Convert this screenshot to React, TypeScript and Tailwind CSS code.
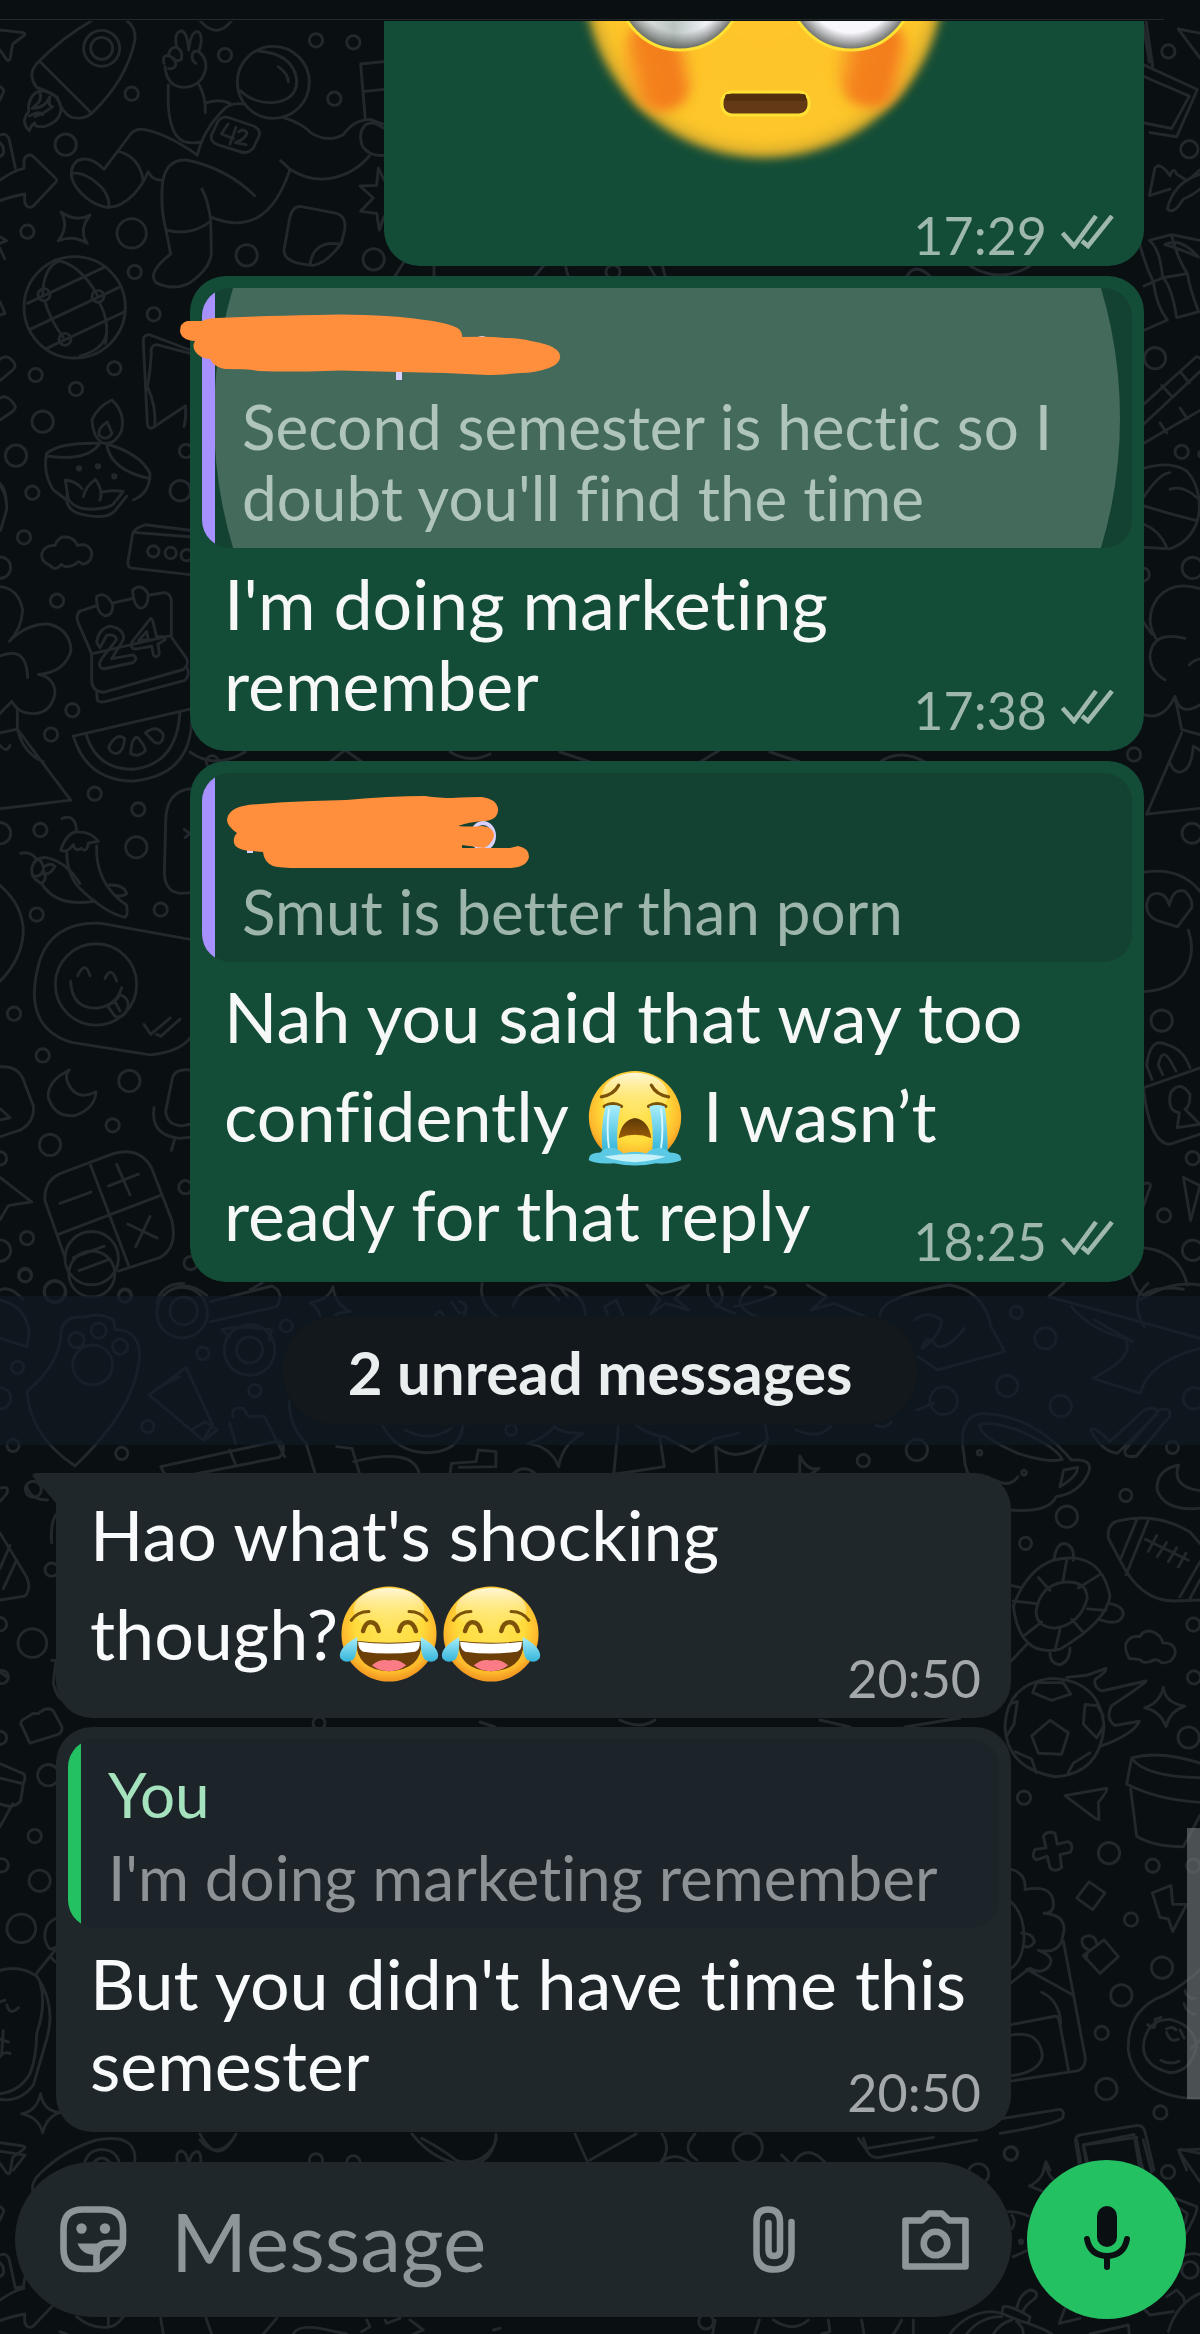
import React, { type ReactNode } from "react";

type Dot = [number, number, number];

/* Small bubbles scattered over the wallpaper; k is the height / width ratio of the group's units. */
function Dots({ at, k }: { at: Dot[]; k: number }) {
  return (
    <>
      {at.map(([x, y, r], i) => (
        <ellipse key={i} cx={x} cy={y} rx={r} ry={r * k} vectorEffect="non-scaling-stroke" />
      ))}
    </>
  );
}

function Lines({ d }: { d: string[] }) {
  return (
    <>
      {d.map((p, i) => (
        <path key={i} d={p} vectorEffect="non-scaling-stroke" />
      ))}
    </>
  );
}

const topLeft = [
  "M0 90L70 98Q80 102 70 108L38 132L30 178Q24 186 18 176L0 150",
  "M275 62Q190 110 118 183L275 340Q380 240 405 120Q408 80 380 62",
  "M118 183Q78 220 110 262Q150 275 172 292Q186 340 215 352Q250 360 275 340",
  "M118 272Q82 290 86 335Q60 366 88 392Q94 374 104 368Q100 382 132 380Q182 366 183 325Q176 276 118 272",
  "M118 276Q132 300 96 325Q134 326 150 290Q142 318 158 320Q130 342 104 350M88 348Q120 330 128 344",
  "M600 62Q650 120 695 62",
  "M530 140Q520 96 545 93Q562 98 566 150Q572 96 592 94Q612 104 598 150",
  "M492 190Q484 168 504 166Q522 172 528 192Q524 208 506 206M506 162Q512 140 530 142Q550 154 544 178Q530 188 520 174",
  "M576 170Q576 150 596 154Q626 180 615 215Q600 262 548 262Q500 258 495 200M576 170Q576 182 588 190",
  "M505 255Q498 400 550 424Q575 432 605 426M596 252Q618 290 616 338",
  "M620 308Q660 296 690 310M732 312Q690 306 670 330Q610 390 592 465Q500 400 430 388Q405 386 392 402L312 508Q270 464 232 482Q200 510 225 556Q262 610 320 622Q360 624 400 584Q428 555 444 516",
  "M444 516Q462 544 488 540M355 454Q420 470 430 544M216 520Q260 514 310 568Q332 600 325 622",
  "M722 272Q760 310 820 308Q892 300 890 240Q880 160 772 153M835 200Q865 222 865 246",
  "M850 352Q910 372 932 398Q980 430 1030 404Q1060 360 1110 358L1150 372M1150 466Q1110 470 1088 440Q1072 400 1096 374Q1120 360 1150 384",
  "M1096 360L1082 192L1152 185M1092 274L1152 268",
  "M842 482L870 508Q950 560 1040 520Q1080 502 1108 468M870 508Q800 720 635 652",
  "M764 587Q680 505 560 480Q500 476 488 545Q480 620 498 690L512 762Q440 818 468 848Q520 874 570 848Q630 806 634 760L632 660Q624 600 606 568",
  "M498 690Q570 710 632 664",
  "M655 362Q668 346 690 354L760 378Q782 388 778 406L760 444Q744 462 724 456L652 434Q630 424 634 406Z",
  "M684 372L664 402L700 416M708 382L690 432M716 396Q728 384 740 396Q744 412 706 428L738 434",
  "M0 405Q20 396 28 420L46 504M0 428Q14 440 10 462L0 470M0 540Q40 512 72 505L72 480Q80 458 98 468L164 532Q176 540 164 550L100 618Q82 630 74 606L74 582Q30 590 0 602",
  "M183 636Q228 668 270 645Q234 692 262 730Q220 704 175 722Q208 680 183 636",
  "M904 620L1010 640Q1040 650 1034 690L1024 730Q980 790 940 796Q850 790 852 750L868 660Q876 616 904 620M930 794Q940 720 1020 732",
  "M1152 540L1135 504L1130 556L1080 558L1120 594L1082 634L1130 640L1138 690L1152 650",
  "M0 710L20 722L0 730M0 745L14 776M0 905L15 940L0 945M0 260Q16 268 8 282L0 300",
  "M128 885Q130 800 180 782M165 780Q240 790 292 886M320 1000Q310 1050 240 1068M135 905Q150 960 190 1012M296 905Q330 960 316 1030",
  "M82 910L312 802M90 988L362 860M140 1045L372 936",
  "M0 1078Q20 1060 40 1085Q52 1100 36 1112L0 1142M0 1195Q20 1180 44 1215Q52 1226 30 1240L0 1260",
  "M570 1050L448 1004Q428 1004 430 1026L442 1270Q444 1290 460 1282L556 1218M570 1060L470 1034Q450 1036 454 1060Q450 1120 442 1160Q470 1220 464 1280M556 1218Q560 1250 552 1280",
  "M336 1200Q292 1220 276 1260Q278 1310 306 1328Q340 1340 364 1294Q378 1240 336 1200M322 1266Q290 1286 298 1306Q320 1326 336 1300Z",
  "M300 1330Q180 1326 140 1360Q128 1420 160 1470L200 1500M140 1368Q260 1386 300 1330M320 1332Q420 1360 450 1420Q450 1480 400 1500M320 1332Q330 1410 450 1436",
  "M205 1500L196 1440Q230 1444 246 1466M250 1490Q256 1460 286 1438Q310 1470 300 1500M306 1476Q340 1470 370 1474L350 1500M0 1450Q18 1470 18 1500",
];

const leftSide = [
  "M0 65Q22 85 20 110L2 148M200 85Q220 115 300 108Q340 105 345 95M200 90Q200 110 240 118Q320 130 345 112L380 85",
  "M150 213Q120 205 126 190Q135 175 165 176Q175 160 195 160Q225 162 232 176Q270 170 276 192Q270 212 245 210Q235 202 228 210Q200 220 184 211Q165 225 150 213",
  "M570 148L436 138Q400 145 398 155L384 205Q382 218 396 218L570 230M400 152L570 160",
  "M236 298L290 287M340 282L398 274M445 268L495 263Q514 266 514 280L514 345L560 385Q568 395 550 405L310 447Q275 445 275 425L275 376L234 318Q226 305 240 298M275 376L514 342",
  "M290 447L292 462Q300 468 330 462L555 425Q570 415 562 402M290 270Q318 260 338 285Q340 305 315 306Q288 300 290 270M398 258Q425 245 444 265Q446 290 422 292Q400 288 398 258",
  "M290 355Q295 330 330 325Q375 330 370 350L335 385L400 378Q415 384 400 392L310 404Q290 400 305 385L350 350Q345 338 320 342L300 365Z",
  "M450 312L395 355Q390 368 410 367L455 362L460 378Q470 386 478 376L474 358L495 350Q500 342 470 345L460 320Q456 308 450 312M440 335L415 352L445 350Z",
  "M0 252Q55 255 68 295Q65 330 28 353Q80 320 145 321Q210 330 213 370Q195 410 115 414Q165 420 165 450Q150 490 90 486Q55 485 35 464L0 486M0 380Q80 360 83 420M52 480L52 515M0 522L52 515L212 646L0 662M52 515Q70 560 130 575M0 545Q20 560 30 545",
  "M220 528L570 478M220 528Q260 610 400 611Q570 600 575 500M258 524Q290 590 400 589Q530 580 540 484",
  "M326 548Q350 520 374 532Q370 560 345 560Q330 558 326 548M392 560Q395 530 412 530Q435 545 436 555Q415 568 392 560M436 522Q470 505 490 525Q488 545 465 540Z",
  "M186 680Q225 670 230 702M182 738Q205 700 240 705Q275 705 295 722L265 725Q260 745 245 735Q225 742 220 728Q200 745 182 738M200 740Q200 790 250 815Q320 855 375 862Q385 858 380 840Q285 800 290 730",
  "M62 744Q95 740 110 756M125 800Q90 790 96 770Q105 750 140 752Q200 760 240 800M100 785Q120 790 130 775Q145 790 125 800Q170 845 285 832M110 755Q125 755 130 770Q150 760 165 768Q150 785 130 782M320 803Q370 800 380 818Q370 825 345 822",
  "M570 625Q495 630 497 690L493 780Q495 815 540 818L570 817M553 700Q570 710 575 705L555 715M0 803Q70 840 70 890Q65 940 0 980",
  "M570 903L300 873Q160 870 120 940Q60 1065 215 1093L450 1116Q540 1110 570 1085M212 980Q215 1030 290 1030Q350 1025 365 992M233 970Q255 940 270 970M315 975Q335 950 350 980",
  "M322 1025Q345 1020 360 1005Q385 1010 385 1025Q375 1050 345 1045ZM345 1018L360 1035M432 1060L452 1078L510 1048M470 1078L482 1082L540 1050",
  "M208 1144Q140 1165 145 1195Q165 1232 225 1228Q285 1215 288 1184Q235 1200 210 1175Q190 1155 208 1144M0 1138Q60 1135 75 1170L100 1210Q105 1240 60 1255L0 1267M0 1215L30 1232L0 1236",
  "M570 1144Q520 1140 515 1165L497 1220Q500 1245 545 1247L570 1244M462 1213Q450 1265 540 1270L570 1268M524 1272L514 1292",
  "M135 1385Q130 1350 180 1335L340 1298Q420 1285 455 1325L515 1420Q535 1470 480 1490L355 1515M135 1385L195 1490M272 1320L385 1503M175 1447L478 1376",
  "M180 1390L273 1369M325 1358L415 1336M350 1318L390 1374M383 1428L472 1454M450 1414L407 1470M220 1490L313 1469M237 1514L330 1493",
  "M0 1342L95 1387L25 1394L0 1420M0 1550Q30 1540 70 1568M490 1560Q550 1525 620 1560",
];

const rightSide = [
  "M40 30L58 75M48 25L68 80M40 78L202 108L140 165L60 160M40 92L178 116L125 155L40 148M145 35L210 70M145 35L210 40",
  "M85 200L75 202L58 236L120 228M85 200Q100 200 120 212Q130 200 140 210L172 218L210 205M112 252Q130 220 210 210M112 252Q130 260 160 240Q190 235 210 228",
  "M30 295Q45 320 70 340Q80 370 112 386L44 398M58 290L124 283L210 290M58 290Q90 300 98 335L42 345M98 335Q125 345 140 383L206 376Q180 350 172 330L98 335M124 283Q140 310 172 330M105 295Q150 285 205 310M105 295Q150 300 205 310",
  "M40 488L200 430L210 432M40 512L210 448M40 535L210 495M95 465L125 478M150 448L178 462M90 510L110 522M150 492L172 505",
  "M40 565Q120 555 170 568Q210 585 208 615Q200 650 120 662L40 660M40 600Q90 570 120 570M40 610Q120 620 200 628M40 632Q90 640 110 660M120 590Q160 585 200 600",
  "M78 770Q40 745 85 720Q130 700 210 710M165 770Q70 760 60 790Q60 810 105 820M40 862Q100 870 135 840Q150 865 210 850M135 840L155 880L210 886M155 884L50 982L210 975M120 920Q135 935 160 930Q185 925 190 900L210 905M178 802Q190 796 210 795M40 750L66 765",
  "M40 1052Q150 1045 210 1075M50 1092Q55 1075 90 1078Q110 1080 118 1092Q130 1070 165 1075Q190 1085 185 1095L142 1118L80 1110Q50 1105 50 1092M175 1122Q200 1150 160 1175Q120 1195 40 1196",
  "M66 1302L50 1285Q60 1250 110 1260Q160 1265 180 1288M98 1296L85 1285Q95 1262 122 1280L138 1292M40 1312L210 1288M40 1312Q60 1380 120 1380L210 1368M148 1342Q110 1340 122 1318Q150 1302 180 1320Q180 1335 165 1338L210 1356L142 1360Z",
  "M160 1420L210 1430L182 1472ZM40 1428Q60 1425 62 1430L40 1455M0 1535Q20 1560 40 1562Q80 1550 160 1555M40 1505Q150 1510 172 1550",
];

const middleBand = [
  "M35 365Q80 280 80 180Q85 135 110 142Q130 125 148 150Q150 165 150 178Q185 180 182 270Q175 420 98 588Q40 500 35 365M0 90Q35 110 38 190L35 230L0 205",
  "M275 95L355 48Q372 65 362 110L275 155M290 178Q320 165 355 180M290 178L300 200M355 180L352 210M205 100Q210 40 240 40",
  "M243 292L278 465L265 510L195 375ZM205 355L235 320M250 480L268 455L284 480L268 508",
  "M305 440Q300 410 318 415L325 440L345 438L350 460L372 560M300 460L308 520M210 590L365 512Q376 535 365 562L255 612M210 590L215 612M300 540L308 585M378 395Q378 470 400 520L412 612",
  "M435 50Q438 105 458 125Q432 130 440 140M435 50Q430 90 405 98Q415 110 418 138M568 140Q575 110 580 140M590 95L600 130Q612 120 605 140M600 95Q612 100 608 130",
  "M630 40Q625 100 650 140M670 110Q680 42 720 45Q765 60 765 140M715 55L730 90M730 48L742 80M790 110L805 90L815 140M790 110L795 140",
  "M845 45L865 72L900 45L882 85L900 120L870 100L850 132L862 90ZM925 45Q920 100 960 130M940 50Q950 90 935 110M980 50Q950 110 990 140M1000 50Q1040 70 960 110M1055 45L1080 80L1060 120L1090 100L1130 140",
  "M1150 140Q1148 80 1240 45Q1285 60 1295 170L1313 245L1225 300L1200 260M1195 150Q1212 118 1230 150Q1230 195 1205 235Q1210 185 1225 230Q1240 235 1260 175",
  "M1390 40L1370 80L1568 205M1500 40Q1475 90 1495 170M1490 90Q1530 30 1568 45M1400 110Q1425 180 1470 205Q1485 260 1428 325L1490 370Q1500 275 1568 235M1430 150L1480 215",
  "M500 468Q520 550 560 548Q600 545 605 468M530 480Q560 520 590 475M725 468Q730 490 762 490Q735 520 730 590Q720 530 690 520Q715 500 725 468",
  "M808 470L802 612M832 468Q850 495 868 500L905 545L935 505L965 490M862 500L868 590L805 612M935 530L937 612M935 530Q965 585 1003 510L985 612M1003 510L1000 468M1040 480Q1070 510 1085 470M1145 465Q1155 480 1165 455",
  "M440 530L460 535L470 612M462 575Q540 530 548 612M588 612L590 580L622 575L625 540L648 545L648 590L600 592M670 612Q685 580 700 612M1045 612L1045 558Q1055 605 1070 595L1060 612M1198 420L1220 400",
  "M1283 430Q1250 440 1260 560Q1260 650 1320 720Q1370 730 1380 680Q1410 670 1422 610Q1430 565 1400 570Q1350 435 1283 430M1280 465Q1290 450 1330 480Q1380 530 1388 568Q1370 580 1330 550Q1280 500 1280 465M1385 650L1390 600L1408 592Q1408 620 1385 650M1300 630Q1320 655 1330 620",
  "M1425 480Q1430 465 1450 515L1495 420Q1512 405 1512 432L1460 550Q1440 545 1425 480M1515 420Q1532 410 1528 440L1485 558Q1468 565 1470 540Z",
  "M1540 585Q1510 600 1512 660Q1522 725 1568 715M1540 585Q1530 650 1568 662M35 650Q40 690 62 690",
];

const lowerRight = [
  "M360 402L325 360Q320 330 360 326Q470 310 570 348L600 370M360 402Q420 480 520 480L600 478M360 402L410 325M378 430L445 325M540 472L600 405M570 475L600 440M436 362L565 402M470 355L445 385M500 368L472 395M530 378L505 405M558 388L535 415",
  "M40 490Q80 420 160 402Q300 380 330 470Q320 520 180 572Q60 590 40 490M108 500Q120 450 190 444Q260 440 262 475Q240 525 165 532Q110 530 108 500M162 400Q170 368 195 370Q225 375 220 402M330 485Q370 490 370 505Q360 530 298 515M150 580Q150 600 180 602Q210 595 210 570M200 402L188 444M298 430L235 455M262 495L318 498M215 515L250 540M180 534L165 575M125 520L75 545M108 485L40 480M115 435L150 460M33 450L65 455M33 595L85 560",
  "M388 590Q370 570 380 558Q395 545 420 548Q430 535 455 538Q485 545 488 560Q530 560 525 582Q515 600 485 598Q470 588 450 596Q430 600 420 592Z",
  "M15 720Q20 640 150 628Q300 630 312 720Q300 810 165 816Q20 800 15 720M95 738L150 708L205 732L185 773L115 771ZM98 655L110 636L190 636L212 658L155 670ZM20 738L42 715L52 672L40 675M255 678L292 680L310 700M255 678L250 715L290 742L310 720M45 768L95 782L108 808M205 808L220 790L270 770",
  "M200 626L260 622L318 609Q320 615 285 630Q280 645 305 652L438 633Q430 640 335 680Q315 705 345 718L418 710Q400 735 300 758",
  "M490 645Q495 675 555 681Q510 690 498 720Q480 690 434 684Q480 675 490 645M195 852L320 838Q325 842 295 865L297 898L285 895Z",
  "M395 780L380 830Q470 860 600 865M395 780Q480 765 600 790M395 780Q430 815 600 818M392 840L410 930Q460 950 550 950L600 890",
  "M130 930Q140 918 165 924L172 945L205 940Q222 945 212 960L180 965L185 990Q165 1000 150 990L142 968L110 975Q92 970 105 955L138 952ZM230 1048L267 1017L315 1038L278 1070ZM457 1038L513 1024L518 1060L560 1060L518 1112L505 1088L480 1085Z",
  "M33 993Q80 1000 75 1032Q165 1020 160 1065Q155 1078 132 1077Q195 1080 192 1110L185 1130Q170 1155 115 1148Q170 1160 145 1180Q120 1195 90 1182L33 1210M80 1184L215 1232M190 1130L255 1350Q260 1370 235 1378L33 1398M33 1055Q75 1080 72 1130Q65 1170 33 1182M65 1115Q100 1115 103 1132Q90 1145 72 1140M33 1290L165 1274Q175 1272 180 1290L205 1376M125 1228Q180 1245 182 1288M33 1310Q120 1300 127 1350Q120 1380 33 1388",
  "M250 1158L312 1128L355 1160L300 1192ZM268 1148Q240 1140 247 1125Q265 1115 285 1125L292 1138M262 1152L258 1165",
  "M600 1185Q520 1230 470 1240Q380 1270 385 1340Q410 1430 600 1432M430 1330Q440 1280 510 1280Q580 1290 590 1330Q575 1380 510 1382Q430 1370 430 1330M443 1290Q470 1305 465 1280L482 1276M500 1305Q510 1325 535 1318M500 1298Q520 1292 528 1300M540 1300L553 1316M483 1358Q510 1368 537 1360M555 1225Q560 1240 585 1240M552 1250Q560 1268 585 1270M575 1335L600 1320",
  "M0 1470L180 1452Q195 1455 188 1468Q170 1480 0 1498M240 1568L226 1510Q230 1500 250 1500L410 1483Q430 1482 435 1495L462 1568M262 1568L250 1520L402 1500L420 1568M535 1530L600 1528M535 1530L560 1568M130 1568L138 1552L150 1568",
];

const lowerLeft = [
  "M0 380Q30 375 20 390L0 403M0 458L80 535Q95 555 75 568L0 575M0 520L30 480M10 555L50 505M0 700L18 708",
  "M170 425Q150 440 155 475M155 680L168 680L160 720Q170 745 190 750M65 785L100 772Q115 775 120 770Q145 760 160 768L185 795Q190 805 170 810L90 824L62 790Z",
  "M0 860L72 878Q78 885 70 895L62 925Q40 940 0 930M0 885L70 895M38 930L0 970",
  "M165 1130Q130 1140 135 1165Q145 1190 165 1180M165 1185L110 1225M150 1195L165 1205M0 1220Q60 1210 110 1230Q170 1280 140 1340L100 1420Q60 1450 0 1445M0 1435Q60 1430 90 1400Q110 1370 110 1330Q140 1280 120 1240M20 1280Q30 1300 55 1285M0 1275L15 1272M0 1340L25 1345M10 1325L5 1365M0 1370Q15 1360 30 1365",
  "M122 1435Q130 1465 180 1468Q140 1475 128 1503Q115 1475 65 1470Q110 1465 122 1435M0 1535L75 1542L40 1568",
];

const bottom = [
  "M0 8L70 18Q80 22 70 28L38 52L30 98Q24 106 18 96L0 70M100 160Q90 130 118 103Q190 30 290 0Q400 -20 405 50L402 90M250 90Q255 30 305 28Q355 30 360 80M272 80Q305 28 340 80M535 80Q522 36 545 33Q562 38 566 75Q572 36 592 34Q608 44 600 80M600 0Q650 60 697 0",
  "M0 200Q16 208 8 222L0 240M0 345Q20 336 28 360L46 444L70 440L75 410M0 368Q14 380 10 402L0 410M0 480Q40 452 72 445M155 500L100 558Q82 570 74 546L74 522Q30 530 0 542M230 530Q270 565 320 562Q350 560 370 530M325 530L325 562",
  "M482 535L490 582M618 535L635 582M880 582Q890 555 960 565L1040 582M1085 575L1110 560L1100 540M1155 540L1160 550L1200 535M1230 540L1270 570L1240 582M830 535L790 582M1480 570L1500 565M180 575L200 582",
  "M1265 -5Q1330 30 1370 62Q1440 80 1480 20L1490 -5",
];

const bottomRight = [
  "M245 45L285 85M280 70Q320 5 378 70M475 -5L510 45Q525 58 550 50L830 0M500 25L700 -8M490 -5L500 25M1130 0L1142 65M1310 0Q1320 60 1330 90M1150 15L1310 -8M1150 15L1165 75M1330 0L1355 95M1500 40L1440 28Q1435 30 1442 42L1500 125",
  "M1036 70Q1045 115 1075 130M1036 70Q1030 120 988 138L1030 155M925 215Q960 215 985 228M935 225Q950 240 937 265M940 350L985 330M1425 175L1490 200Q1495 215 1455 285M1440 205L1462 220L1455 250M1445 350Q1480 335 1500 345M1400 470L1430 450L1450 470L1455 490M1335 510L1350 525L1420 515M1405 575Q1430 490 1500 460M1095 505Q1085 530 1078 550L1140 535",
  "M750 582Q800 515 880 515L905 520M905 520L910 500Q930 495 990 530L985 550Q950 540 905 520M950 505Q960 460 990 450Q1020 455 1005 475Q970 500 970 515M985 550Q1040 570 1055 582M800 582Q840 530 905 530M880 582Q900 550 935 540M950 545Q970 560 970 582",
  "M45 540L38 582M178 540L165 582M220 540Q280 580 325 540M385 540L390 575L365 582M485 540L492 582M605 540Q590 570 580 582M640 540L640 582M1170 582L1285 555L1288 582",
];

function Wallpaper() {
  return (
    <svg
      aria-hidden="true"
      className="absolute inset-0 h-full w-full"
      viewBox="0 0 1200 2334"
      preserveAspectRatio="xMidYMin slice"
      fill="none"
      stroke="#22282c"
      strokeWidth="2.9"
      strokeLinecap="round"
      strokeLinejoin="round"
    >
      <g transform="scale(.33333)">
        <Lines d={topLeft} />
        <Dots
          k={1}
          at={[
            [305, 145, 54], [305, 145, 33], [197, 434, 32], [395, 281, 20], [675, 165, 20], [948, 121, 20], [1060, 127, 20],
            [1003, 296, 20], [82, 695, 20], [395, 700, 44], [404, 816, 20], [740, 766, 32], [1121, 778, 32], [461, 943, 20],
            [343, 1105, 20], [107, 1125, 20], [228, 1167, 20], [128, 1265, 32], [48, 1367, 32], [97, 1478, 20],
            [558, 1353, 20], [541, 1472, 31], [820, 247, 108], [224, 922, 152], [132, 884, 18], [294, 889, 18], [195, 1018, 18],
            [237, 1405, 5], [294, 1399, 5], [343, 1429, 5],
          ]}
        />
      </g>
      <g transform="translate(0 450) scale(.33333 .54202)">
        <Lines d={leftSide} />
        <Dots
          k={0.615}
          at={[
            [72, 161, 20], [0, 217, 32], [171, 278, 20], [460, 187, 17], [512, 190, 17], [560, 194, 17], [217, 480, 20],
            [153, 525, 20], [284, 634, 20], [415, 663, 20], [409, 733, 32], [121, 701, 20], [0, 707, 32], [110, 857, 20],
            [482, 848, 20], [42, 1040, 20], [128, 1117, 20], [388, 1164, 32], [338, 1246, 20], [150, 1282, 32], [0, 1307, 20],
            [556, 1360, 20], [572, 1500, 20], [81, 1454, 20], [75, 1522, 20], [164, 1552, 32], [375, 1560, 20], [0, 1477, 32],
            [288, 986, 122], [275, 1491, 80], [637, 575, 18],
          ]}
        />
      </g>
      <g transform="translate(1130 0) scale(.33333 .82909)">
        <Lines d={rightSide} />
        <Dots
          k={0.402}
          at={[
            [115, 62, 20], [178, 180, 26], [75, 432, 32], [155, 545, 20], [188, 685, 32], [38, 693, 20], [12, 910, 20],
            [186, 1005, 30], [95, 1231, 32], [188, 1397, 20], [102, 1466, 20], [188, 1508, 31], [214, 548, 8],
          ]}
        />
      </g>
      <g transform="translate(0 1270) scale(.76531 .33333)">
        <Lines d={middleBand} />
        <Dots
          k={2.3}
          at={[
            [72, 66, 14], [33, 17, 8], [163, 78, 8], [238, 128, 33], [240, 123, 18], [326, 240, 33], [326, 240, 17], [23, 292, 8],
            [265, 250, 8], [374, 168, 8], [333, 362, 8], [193, 470, 8], [17, 526, 8], [159, 550, 8], [100, 210, 10],
            [129, 182, 10], [157, 230, 10], [121, 285, 26], [0, 385, 14], [1328, 127, 8], [1366, 205, 14], [1316, 348, 14],
            [1386, 408, 14], [1233, 392, 18], [1198, 540, 14], [1128, 572, 8], [1532, 532, 8], [1471, 676, 8], [1394, 740, 14],
            [1340, 820, 8], [1560, 385, 14], [1280, 548, 3], [1338, 608, 3], [120, 12, 30], [668, 480, 7],
          ]}
        />
      </g>
      <g transform="translate(0 1270) scale(.33333 .57405)">
        <Lines d={lowerLeft} />
        <Dots
          k={0.581}
          at={[
            [100, 382, 24], [155, 522, 20], [97, 650, 43], [0, 617, 20], [5, 709, 20], [0, 815, 20], [145, 880, 32], [104, 986, 20],
            [5, 1037, 20], [119, 1064, 32], [64, 1147, 43],
          ]}
        />
      </g>
      <g transform="translate(1000 1350) scale(.33333 .52296)">
        <Lines d={lowerRight} />
        <Dots
          k={0.637}
          at={[
            [580, 525, 20], [582, 626, 20], [566, 741, 32], [72, 856, 20], [327, 962, 32], [458, 986, 20], [580, 986, 20],
            [393, 1089, 20], [486, 1181, 32], [364, 1234, 32], [305, 1306, 20], [319, 1413, 32], [481, 1458, 20], [33, 1536, 20],
          ]}
        />
      </g>
      <g transform="translate(0 2140) scale(.33333)">
        <Lines d={bottom} />
        <Dots k={1} at={[[948, 61, 20], [1060, 67, 20]]} />
      </g>
      <g transform="translate(700 2140) scale(.33333)">
        <Lines d={bottomRight} />
        <Dots k={1} at={[[143, 23, 44], [932, 41, 20], [1404, 96, 20], [835, 102, 31], [1470, 390, 25], [963, 305, 5], [18, 545, 22]]} />
      </g>
      {/* Scraps that show in the narrow gaps between bubbles */}
      <path d="M395 276L404 262M434 262V276M535 276L545 264M565 264L568 276M648 264L655 276M665 276L662 264M907 276Q915 262 930 276M970 266Q1000 284 1030 266M190 752Q215 770 245 752M330 762L345 750L362 762M450 752Q470 764 490 754M560 752L590 762M700 762L720 750M770 752L800 762M880 762Q900 748 925 762M250 1290L262 1283M480 1722L495 1727M620 1720Q640 1730 655 1720M820 1720L850 1727M905 1727L960 1718" />
      <circle cx="613" cy="272" r="7" />
      <circle cx="319" cy="1723" r="6" />
      <path d="M200 2134Q218 2168 236 2134M412 2134Q435 2163 470 2166Q495 2160 496 2134M575 2134L588 2163M590 2160L636 2134M662 2134Q672 2150 660 2163Q675 2150 690 2163M695 2134Q680 2150 697 2160" />
    </svg>
  );
}

/* ---------- emoji ---------- */

function FlushedFace() {
  return (
    <svg role="img" aria-label="Flushed face" className="mx-auto block h-[150px] w-[380px]" viewBox="575 21 380 150">
      <defs>
        <radialGradient id="flushFace" cx="50%" cy="50%" r="50%">
          <stop offset="0" stopColor="#ffc52b" />
          <stop offset=".9" stopColor="#fdc62c" />
          <stop offset="1" stopColor="#d0a62b" />
        </radialGradient>
        <linearGradient id="flushEyeL">
          <stop offset="0" stopColor="#fff" />
          <stop offset=".45" stopColor="#b9c4c0" />
          <stop offset=".7" stopColor="#eef0f5" />
          <stop offset="1" stopColor="#f8f8fd" />
        </linearGradient>
        <radialGradient id="flushShade">
          <stop offset=".72" stopColor="#555" stopOpacity="0" />
          <stop offset="1" stopColor="#4a4f48" stopOpacity=".85" />
        </radialGradient>
        <linearGradient id="flushCheekL">
          <stop offset="0" stopColor="#f68a22" stopOpacity=".1" />
          <stop offset=".3" stopColor="#f4821f" />
          <stop offset=".75" stopColor="#f37c1e" />
          <stop offset="1" stopColor="#f9a324" stopOpacity=".1" />
        </linearGradient>
        <filter id="flushSoft" x="-10%" y="-10%" width="120%" height="120%">
          <feGaussianBlur stdDeviation="5" />
        </filter>
        <filter id="cheekSoft" x="-30%" y="-30%" width="160%" height="160%">
          <feGaussianBlur stdDeviation="6" />
        </filter>
      </defs>
      <circle cx="765" cy="-22" r="180" fill="url(#flushFace)" filter="url(#flushSoft)" />
      <g filter="url(#cheekSoft)">
        <ellipse cx="659" cy="66" rx="37" ry="46" fill="url(#flushCheekL)" transform="rotate(-12 659 66)" />
        <ellipse cx="874" cy="64" rx="38" ry="44" fill="url(#flushCheekL)" transform="rotate(12 874 64)" />
      </g>
      <circle cx="681" cy="-12" r="62" fill="url(#flushEyeL)" />
      <circle cx="681" cy="-12" r="62" fill="url(#flushShade)" stroke="#ffe135" strokeWidth="3" />
      <circle cx="852" cy="-12" r="62" fill="#f7f7fc" />
      <circle cx="852" cy="-12" r="62" fill="url(#flushShade)" stroke="#ffe135" strokeWidth="3" />
      <rect x="723" y="92" width="87" height="23" rx="10" fill="#643a16" stroke="#ffe135" strokeWidth="3" />
      <rect x="726" y="94" width="81" height="7" rx="3" fill="#512f0f" />
    </svg>
  );
}

function FaceGradients() {
  return (
    <svg aria-hidden="true" className="absolute h-0 w-0">
      <defs>
        <radialGradient id="face" cx="50%" cy="42%" r="56%">
          <stop offset="0" stopColor="#ffe45c" />
          <stop offset=".62" stopColor="#ffdc3c" />
          <stop offset=".88" stopColor="#fdb92c" />
          <stop offset="1" stopColor="#f39a22" />
        </radialGradient>
        <linearGradient id="shine" x1="0" y1="0" x2="0" y2="1">
          <stop offset="0" stopColor="#fff7d8" />
          <stop offset="1" stopColor="#ffec8a" stopOpacity="0" />
        </linearGradient>
        <linearGradient id="tear" x1="0" y1="0" x2="0" y2="1">
          <stop offset="0" stopColor="#a8eefb" />
          <stop offset="1" stopColor="#35b5d9" />
        </linearGradient>
        <linearGradient id="mouth" x1="0" y1="0" x2="0" y2="1">
          <stop offset="0" stopColor="#5c3a06" />
          <stop offset="1" stopColor="#9a5a08" />
        </linearGradient>
      </defs>
    </svg>
  );
}

function CryingFace() {
  return (
    <svg role="img" aria-label="Loudly crying face" className="-my-1 inline-block h-[98px] w-[100px] align-[-21px]" viewBox="0 0 104 100">
      <circle cx="52" cy="49" r="48" fill="url(#face)" />
      <ellipse cx="52" cy="26" rx="34" ry="23" fill="url(#shine)" />
      <g fill="none" stroke="#7b5208" strokeWidth="3.4" strokeLinecap="round">
        <path d="M17 28Q30 26 35 16M69 16Q74 26 87 28" />
        <path d="M20 38Q29 32 38 38M66 38Q75 32 84 38" />
      </g>
      <path d="M52 50Q66 52 69 71Q52 64 35 71Q38 52 52 50Z" fill="url(#mouth)" />
      <path d="M21 38Q29 35 37 38Q32 60 34 84H18Q16 60 21 38Z" fill="url(#tear)" />
      <path d="M67 38Q75 35 83 38Q86 60 86 84H70Q72 60 67 38Z" fill="url(#tear)" />
      <path d="M25 40Q22 62 25 82M79 40Q82 62 79 82" stroke="#d8f7fd" strokeWidth="2" fill="none" />
      <path d="M4 94Q3 86 16 86Q20 80 29 81Q36 83 40 87Q52 83 64 87Q68 82 76 81Q84 81 88 86Q101 86 100 94Q92 98 74 97Q52 102 30 97Q10 98 4 94Z" fill="#5cc9e4" />
      <path d="M20 90Q52 85 84 90Q70 95 52 96Q32 95 20 90Z" fill="#c5f2fa" />
    </svg>
  );
}

function JoyFace() {
  return (
    <svg role="img" aria-label="Face with tears of joy" className="-my-1 inline-block h-[98px] w-[102px] align-[-19px]" viewBox="0 0 103 100">
      <circle cx="51.500" cy="50" r="48.500" fill="url(#face)" />
      <ellipse cx="51.500" cy="25" rx="36" ry="22" fill="url(#shine)" />
      <g fill="none" stroke="#7b5208" strokeLinecap="round">
        <path d="M13 36Q19 27 31 27M72 27Q84 27 90 36" strokeWidth="3.2" />
        <path d="M25 47Q28 37 33 38Q39 38 41 47M62 47Q64 38 70 38Q76 37 79 47" strokeWidth="4.600" />
      </g>
      <path d="M18 57Q51 61 85 57Q85 87 51.500 88Q18 87 18 57Z" fill="#6b3f07" />
      <path d="M20 58Q51 62 83 58Q83 67 78 68Q51 72 25 68Q20 66 20 58Z" fill="#fff" />
      <path d="M34 82Q42 75 51.500 77Q61 75 69 82Q62 88 51.500 88Q41 88 34 82Z" fill="#fb7b86" />
      <path d="M19 53Q20 70 15 76Q7 81 2 75Q-2 65 19 53Z" fill="url(#tear)" />
      <path d="M84 53Q83 70 88 76Q96 81 101 75Q105 65 84 53Z" fill="url(#tear)" />
    </svg>
  );
}

/* ---------- message parts ---------- */

function Time({ children, sent, className = "" }: { children: string; sent?: boolean; className?: string }) {
  return (
    <div
      className={`relative flex items-center justify-end gap-3.5 pr-[18px] text-[52px] leading-[60px] ${sent ? "text-[#9fb8ae]" : "text-[#a4a8aa]"} ${className}`}
    >
      <time>{children}</time>
      {sent && (
        <svg role="img" aria-label="Delivered" className="mb-1.5 h-[34px] w-[53px]" viewBox="0 0 53 34" fill="none" stroke="currentColor" strokeWidth="4.600">
          <path d="M1.500 18L13 31L35 1M21 26L27 31L51 1" />
        </svg>
      )}
    </div>
  );
}

function Quote({ children, name, sent, pressed }: { children: ReactNode; name: ReactNode; sent?: boolean; pressed?: boolean }) {
  return (
    <blockquote
      className={`relative flex overflow-hidden rounded-[28px] ${sent ? "bg-[#144232] text-[#9db5ab]" : "bg-[#1c2329] text-[#8c9295]"}`}
    >
      {pressed && (
        <span className="absolute top-1/2 left-1/2 h-[906px] w-[906px] -translate-x-1/2 -translate-y-1/2 rounded-full bg-[#446a5c]" />
      )}
      <span className={`relative w-[13px] shrink-0 ${sent ? "bg-[#a791ff]" : "bg-[#24c163]"}`} />
      <div className={`relative pt-5 pr-3 pb-[15px] pl-[27px] text-[62px] leading-[71px] ${pressed ? "text-[#afc4bb]" : ""}`}>
        <div className="mb-3 h-[71px] text-[#a5e2be]">{name}</div>
        <p>{children}</p>
      </div>
    </blockquote>
  );
}

function Bubble({ children, sent, className = "" }: { children: ReactNode; sent?: boolean; className?: string }) {
  return (
    <article className={`relative rounded-[36px] px-3 pt-3 ${sent ? "bg-[#144d37] pb-[11px]" : "bg-[#1f272a] pb-[10px]"} ${className}`}>
      {children}
    </article>
  );
}

function ScribbleLong() {
  return (
    <svg aria-hidden="true" className="absolute top-[36px] -left-3 h-[68px] w-[386px]" viewBox="178 312 386 68">
      <path d="M396 366H402V380H396ZM474 340Q482 332 490 340Z" fill="#d8d0ff" />
      <path
        fill="#ff8f3c"
        d="M180 331Q180 323 187 321L202 321Q208 318 216 318Q260 316 316 315Q340 314 365 315Q400 316 425 320Q450 323 459 329Q463 333 462 337Q490 336 505 338Q520 338 531 341Q550 344 557 350Q561 354 560 358Q559 364 549 368Q535 373 521 373Q500 375 488 375Q465 374 445 373Q400 372 359 371Q340 370 325 371Q290 372 259 371Q250 369 225 369Q214 367 210 359Q199 358 195 351Q192 346 195 341Q181 340 180 331Z"
      />
    </svg>
  );
}

function ScribbleShort() {
  return (
    <svg aria-hidden="true" className="absolute top-[31px] left-[34px] h-[80px] w-[308px]" viewBox="224 792 308 80">
      <ellipse cx="483" cy="836" rx="11" ry="13" fill="none" stroke="#d8d0ff" strokeWidth="4" />
      <path d="M247 846H253V853H247Z" fill="#d8d0ff" />
      <path
        fill="#ff8f3c"
        d="M227 820Q228 808 248 805Q280 802 312 801L346 800Q390 796 425 796Q440 798 452 798Q470 797 482 797Q496 799 498 808Q499 820 484 821Q468 822 458 826Q470 827 482 826Q494 827 494 836Q492 844 484 848L462 845V848L510 848L518 846Q529 848 529 857Q527 867 511 868L299 868Q280 868 273 866Q264 862 263 852L252 851Q236 850 234 843Q233 837 237 833Q227 826 227 820Z"
      />
    </svg>
  );
}

/* ---------- input icons ---------- */

function StickerIcon() {
  return (
    <svg className="h-[67px] w-[67px]" viewBox="0 0 67 67" fill="none" stroke="currentColor" strokeWidth="6.600">
      <path d="M63 35V23Q63 3.500 43 3.500H23Q3.500 3.500 3.500 23V43Q3.500 63 23 63H36Q41 63 45 59L58 47Q63 42 63 35Z" />
      <path d="M36.500 62V50Q36.500 37 48 37H62" />
      <circle cx="21.500" cy="22.500" r="5.200" fill="currentColor" stroke="none" />
      <circle cx="45" cy="22.500" r="5.200" fill="currentColor" stroke="none" />
      <path d="M17.500 37.500H45Q37 43 36 49Q22 49 17.500 37.500Z" fill="currentColor" stroke="none" />
    </svg>
  );
}

function ClipIcon() {
  return (
    <svg className="h-[67px] w-[42px]" viewBox="0 0 42 67" fill="none" stroke="currentColor" strokeWidth="6.500" strokeLinecap="round">
      <path d="M38.500 16V46Q38.500 63.500 21 63.500Q3.500 63.500 3.500 46V16Q3.500 3.500 15 3.500Q27 3.500 27 16V44Q27 50 21 50Q15.500 50 15.500 44V17" />
    </svg>
  );
}

function CameraIcon() {
  return (
    <svg className="h-[60px] w-[67px]" viewBox="0 0 67 60" fill="none" stroke="currentColor" strokeWidth="6.600" strokeLinejoin="round">
      <path d="M3.500 10.500H20L27 3.500H40L47 10.500H63.500V56.500H3.500Z" />
      <circle cx="33.500" cy="33.500" r="11.800" />
    </svg>
  );
}

function MicIcon() {
  return (
    <svg className="mb-1 h-[64px] w-[48px]" viewBox="0 0 48 64" fill="none" stroke="#0a0f12" strokeWidth="6" strokeLinecap="round">
      <rect x="14" y="0" width="20" height="41" rx="10" fill="#0a0f12" stroke="none" />
      <path d="M4 33Q7 49.500 24 50Q41 49.500 44 33M24 50V61" />
    </svg>
  );
}

export default function App() {
  return (
    <div className="relative isolate flex min-h-screen flex-col overflow-hidden bg-[#0a0f12] font-[Lato,'Open_Sans',sans-serif] text-[#f5f8f7] [font-variant-ligatures:none]">
      <Wallpaper />
      <FaceGradients />
      <header className="relative h-[21px] bg-[#0a0f12] pr-9">
        <div className="h-5 border-b border-[#26292b]" />
      </header>

      <main className="relative flex flex-col">
        <section className="flex flex-col gap-2.5 pr-14 pl-[190px]">
          <article className="w-[760px] max-w-full self-end rounded-b-[36px] bg-[#144d37] px-3 pb-px">
            <FlushedFace />
            <Time sent className="mt-[34px]">17:29</Time>
          </article>

          <Bubble sent>
            <Quote sent pressed name="">
              Second semester is hectic so I doubt you'll find the time
            </Quote>
            <ScribbleLong />
            <p className="px-[22px] pt-[15px] text-[70px] leading-[81px]">I'm doing marketing remember</p>
            <Time sent className="-mt-[45px]">17:38</Time>
          </Bubble>

          <Bubble sent>
            <Quote sent name="">
              Smut is better than porn
            </Quote>
            <ScribbleShort />
            <p className="px-[22px] pt-[5px] text-[70px] leading-[99px]">
              Nah you said that way too confidently <CryingFace /> I wasn’t ready for that reply
            </p>
            <Time sent className="-mt-[53px]">18:25</Time>
          </Bubble>
        </section>

        <div className="mt-3.5 flex h-[149px] items-center justify-center bg-[#101b27]/60">
          <div className="rounded-full bg-[#12181b] px-[66px] pt-5 pb-4 text-[60px] leading-[73px] font-bold text-[#eaeeee]">
            2 unread messages
          </div>
        </div>

        <section className="mt-7 flex flex-col gap-[9px] pr-[189px] pl-14">
          <Bubble>
            <svg aria-hidden="true" className="absolute top-0 -left-6 h-9 w-[60px]" viewBox="0 0 60 36" fill="#1f272a">
              <path d="M60 0H4Q-2 1 2 5L24 30V36H60Z" />
            </svg>
            <p className="relative px-[22px] text-[70px] leading-[99px] text-[#f8fafb]">
              Hao what's shocking{" "}
              <span className="whitespace-nowrap">
                though?
                <JoyFace />
                <JoyFace />
              </span>
            </p>
            <Time className="-mt-[35px]">20:50</Time>
          </Bubble>

          <Bubble>
            <Quote name="You">I'm doing marketing remember</Quote>
            <p className="pt-[15px] pr-2 pl-[22px] text-[70px] leading-[81px] text-[#f8fafb]">But you didn't have time this semester</p>
            <Time className="-mt-[43px]">20:50</Time>
          </Bubble>
        </section>
      </main>

      <footer className="relative mt-7 flex items-center gap-[15px] pr-3.5 pb-3.5 pl-[15px]">
        <div className="flex h-[155px] min-w-0 flex-1 items-center rounded-full bg-[#1f272a] pr-[43px] pl-[45px] text-[#8d969a]">
          <button type="button" aria-label="Stickers and emoji" className="shrink-0">
            <StickerIcon />
          </button>
          <input
            type="text"
            aria-label="Message"
            placeholder="Message"
            className="ml-[44px] h-[100px] min-w-0 flex-1 bg-transparent text-[82px] leading-[100px] outline-none placeholder:text-[#8d969a]"
          />
          <button type="button" aria-label="Attach" className="mr-[107px] shrink-0">
            <ClipIcon />
          </button>
          <button type="button" aria-label="Camera" className="shrink-0">
            <CameraIcon />
          </button>
        </div>
        <button
          type="button"
          aria-label="Record voice message"
          className="flex size-[159px] shrink-0 items-center justify-center rounded-full bg-[#24c163]"
        >
          <MicIcon />
        </button>
      </footer>

      <div aria-hidden="true" className="absolute right-0 bottom-[235px] h-[271px] w-[13px] bg-[#6f7577]/65" />
    </div>
  );
}
